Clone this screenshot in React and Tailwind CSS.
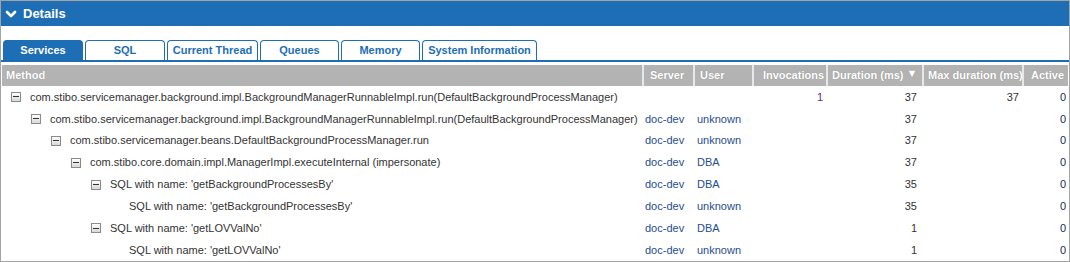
import { ChevronDown } from "lucide-react";

const tabs = [
  { label: "Services", w: "w-[80px]", active: true },
  { label: "SQL", w: "w-[80px]" },
  { label: "Current Thread", w: "w-[91px]" },
  { label: "Queues", w: "w-[79px]" },
  { label: "Memory", w: "w-[79px]" },
  { label: "System Information", w: "w-[115px]" },
];

const rows = [
  { level: 0, toggle: true, name: "com.stibo.servicemanager.background.impl.BackgroundManagerRunnableImpl.run(DefaultBackgroundProcessManager)", server: "", user: "", inv: "1", dur: "37", max: "37", active: "0" },
  { level: 1, toggle: true, name: "com.stibo.servicemanager.background.impl.BackgroundManagerRunnableImpl.run(DefaultBackgroundProcessManager)", server: "doc-dev", user: "unknown", inv: "", dur: "37", max: "", active: "0" },
  { level: 2, toggle: true, name: "com.stibo.servicemanager.beans.DefaultBackgroundProcessManager.run", server: "doc-dev", user: "unknown", inv: "", dur: "37", max: "", active: "0" },
  { level: 3, toggle: true, name: "com.stibo.core.domain.impl.ManagerImpl.executeInternal (impersonate)", server: "doc-dev", user: "DBA", inv: "", dur: "37", max: "", active: "0" },
  { level: 4, toggle: true, name: "SQL with name: 'getBackgroundProcessesBy'", server: "doc-dev", user: "DBA", inv: "", dur: "35", max: "", active: "0" },
  { level: 5, toggle: false, name: "SQL with name: 'getBackgroundProcessesBy'", server: "doc-dev", user: "unknown", inv: "", dur: "35", max: "", active: "0" },
  { level: 4, toggle: true, name: "SQL with name: 'getLOVValNo'", server: "doc-dev", user: "DBA", inv: "", dur: "1", max: "", active: "0" },
  { level: 5, toggle: false, name: "SQL with name: 'getLOVValNo'", server: "doc-dev", user: "unknown", inv: "", dur: "1", max: "", active: "0" },
];

const indents = ["pl-[9px]", "pl-[29px]", "pl-[49px]", "pl-[69px]", "pl-[89px]", "pl-[127px]"];

const cols = "grid grid-cols-[640px_51px_59px_74px_96px_100px_1fr]";

const MinusBox = () => (
  <span className="mr-[9px] flex h-[10px] w-[10px] shrink-0 items-center justify-center border border-[#8a8a8a] bg-gradient-to-b from-white to-[#d8d8d8]">
    <span className="h-px w-[6px] bg-[#333]" />
  </span>
);

export default function App() {
  return (
    <div
      className="h-[262px] w-[1070px] overflow-hidden border border-[#a4a4a4] bg-white text-[11px]"
      style={{ fontFamily: "'Liberation Sans', Arial, sans-serif" }}
    >
      {/* Panel header */}
      <div className="flex h-[25px] items-center gap-[4px] bg-[#1d6eb5] px-[2px] text-[13px] font-bold text-white">
        <ChevronDown size={16} strokeWidth={4} />
        <span>Details</span>
      </div>

      {/* Tabs */}
      <div className="mt-[14px] flex items-end gap-[2px] border-b-2 border-[#1d6eb5] pl-[2px]">
        {tabs.map((t) => (
          <div
            key={t.label}
            className={`flex h-[20px] items-center justify-center rounded-t-[4px] border border-b-0 border-[#1d6eb5] font-bold ${t.w} ${
              t.active ? "bg-[#1d6eb5] text-white" : "bg-white text-[#1d6eb5]"
            }`}
          >
            {t.label}
          </div>
        ))}
      </div>

      {/* Table */}
      <div className="mx-px mt-[3px]">
        <div className={`${cols} h-[21px] bg-[#b3b3b3] font-bold text-white [text-shadow:0_0_1px_#888]`}>
          <div className="flex items-center px-[4px]">Method</div>
          <div className="flex items-center border-l-2 border-[#e8e8e8] px-[6px]">Server</div>
          <div className="flex items-center border-l-2 border-[#e8e8e8] px-[5px]">User</div>
          <div className="flex items-center justify-end border-l-2 border-[#e8e8e8] px-[2px]">Invocations</div>
          <div className="flex items-center border-l-2 border-[#e8e8e8] px-[4px]">
            Duration (ms)
            <span className="ml-[3px] -mt-[4px] text-[11px]">▼</span>
          </div>
          <div className="flex items-center overflow-hidden whitespace-nowrap border-l-2 border-[#e8e8e8] px-[4px]">Max duration (ms)</div>
          <div className="flex items-center border-l-2 border-[#e8e8e8] px-[7px]">Active</div>
        </div>

        {rows.map((r, i) => (
          <div key={i} className={`${cols} h-[21.9px] items-center`}>
            <div className={`flex items-center whitespace-nowrap text-[#333] ${indents[r.level]}`}>
              {r.toggle && <MinusBox />}
              <span>{r.name}</span>
            </div>
            <div className="px-[3px] text-[#1f4d8f]">{r.server}</div>
            <div className="px-[4px] text-[#1f4d8f]">{r.user}</div>
            <div className="pr-[3px] text-right text-[#6b1f7a]">{r.inv}</div>
            <div className="pr-[5px] text-right text-[#333]">{r.dur}</div>
            <div className="pr-[3px] text-right text-[#333]">{r.max}</div>
            <div className="pr-[2px] text-right text-[#1a2b4f]">{r.active}</div>
          </div>
        ))}
      </div>
    </div>
  );
}
